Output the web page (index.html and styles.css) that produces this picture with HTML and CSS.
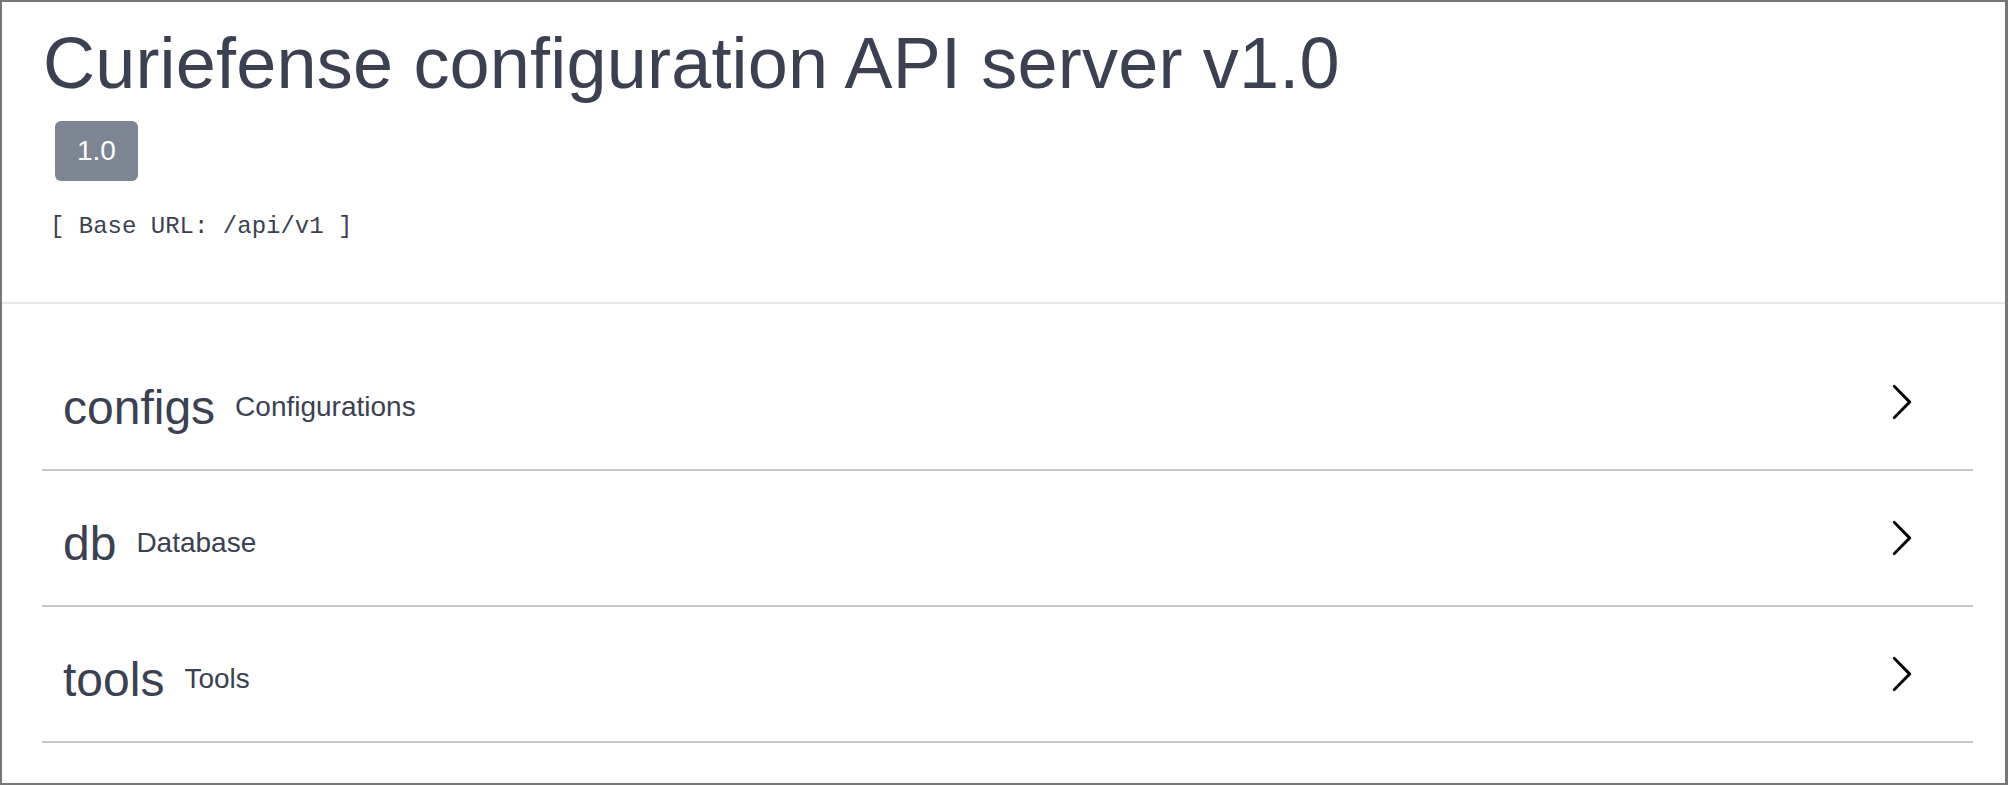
FILE: index.html
```html
<!DOCTYPE html>
<html lang="en">
<head>
    <meta charset="UTF-8">
    <meta name="viewport" content="width=device-width, initial-scale=1.0">
    <title>Curiefense configuration API server</title>
    <link rel="stylesheet" href="styles.css">
</head>
<body>
    <div class="frame">
        <div class="info">
            <h2 class="title">Curiefense configuration API server v1.0</h2>
            <span class="version">1.0</span>
            <pre class="base-url">[ Base URL: /api/v1 ]</pre>
        </div>

        <div class="tags">
            <div class="tag">
                <span class="tag-name">configs</span>
                <small>Configurations</small>
                <button class="expand" aria-label="expand">
                    <svg width="40" height="40" viewBox="0 0 20 20"><path d="M13.25 10L6.109 2.58a.697.697 0 0 1 0-.979.68.68 0 0 1 .969 0l7.83 7.908a.697.697 0 0 1 0 .979l-7.83 7.908a.68.68 0 0 1-.969 0 .697.697 0 0 1 0-.979L13.25 10z"/></svg>
                </button>
            </div>
            <div class="tag">
                <span class="tag-name">db</span>
                <small>Database</small>
                <button class="expand" aria-label="expand">
                    <svg width="40" height="40" viewBox="0 0 20 20"><path d="M13.25 10L6.109 2.58a.697.697 0 0 1 0-.979.68.68 0 0 1 .969 0l7.83 7.908a.697.697 0 0 1 0 .979l-7.83 7.908a.68.68 0 0 1-.969 0 .697.697 0 0 1 0-.979L13.25 10z"/></svg>
                </button>
            </div>
            <div class="tag">
                <span class="tag-name">tools</span>
                <small>Tools</small>
                <button class="expand" aria-label="expand">
                    <svg width="40" height="40" viewBox="0 0 20 20"><path d="M13.25 10L6.109 2.58a.697.697 0 0 1 0-.979.68.68 0 0 1 .969 0l7.83 7.908a.697.697 0 0 1 0 .979l-7.83 7.908a.68.68 0 0 1-.969 0 .697.697 0 0 1 0-.979L13.25 10z"/></svg>
                </button>
            </div>
        </div>
    </div>
</body>
</html>
```

FILE: styles.css
```css
* { box-sizing: border-box; margin: 0; padding: 0; }

body {
    font-family: 'Liberation Sans', Arial, sans-serif;
    color: #3b4151;
    background: #fff;
}

.frame {
    height: 785px;
    border: 2px solid #777;
    border-right-width: 3px;
    overflow: hidden;
}

/* Bloco de informações */
.info {
    display: flex;
    flex-direction: column;
    align-items: flex-start;
    padding: 20px 40px 0;
    height: 302px;
    border-bottom: 2px solid #e6e6e6;
}
.title {
    margin-left: 1px;
    font-size: 72px;
    font-weight: normal;
    line-height: 83px;
    letter-spacing: 0.2px;
}
.version {
    margin: 16px 0 0 13px;
    padding: 14px 22px;
    font-size: 28px;
    line-height: 32px;
    color: #fff;
    background: #7d8492;
    border-radius: 6px;
}
.base-url {
    margin: 32px 0 0 8px;
    font-family: 'Liberation Mono', 'Courier New', monospace;
    font-size: 24px;
    line-height: 27px;
}

/* Lista de tags */
.tags { padding: 41px 32px 0 40px; }
.tag {
    display: flex;
    align-items: center;
    height: 126px;
    margin-bottom: 10px;
    padding: 0 52px 0 21px;
    border-bottom: 2px solid #c4c6cb;
}
.tag-name { font-size: 48px; }
.tag small {
    margin-left: 20px;
    font-size: 28px;
}
.expand {
    margin-left: auto;
    margin-bottom: 10px;
    border: none;
    background: none;
    display: flex;
}
.expand svg { fill: #000; }
```
